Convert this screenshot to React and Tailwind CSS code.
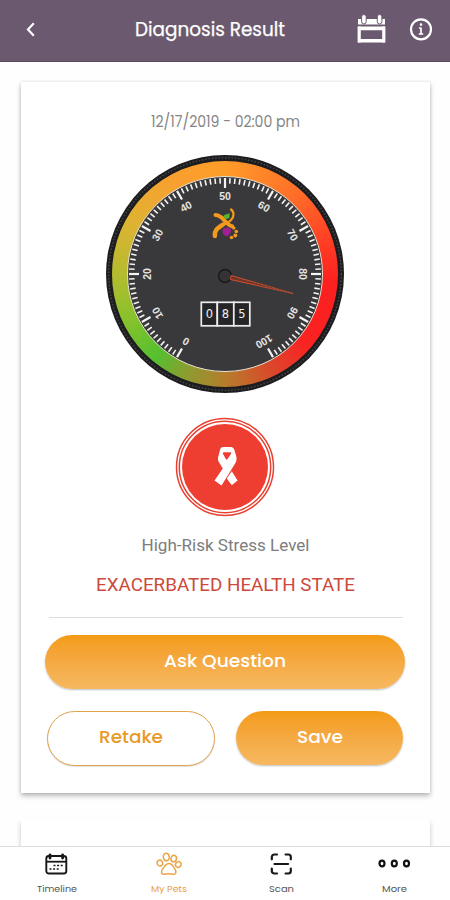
import React from "react";

const FONT = "font-['Poppins',Inter,'Liberation_Sans',sans-serif]";

// Point on the dial; 0 degrees is straight up, clockwise positive
const polar = (deg, r) => {
  const a = (deg * Math.PI) / 180;
  return [119 + r * Math.sin(a), 119 - r * Math.cos(a)];
};

function Label({ children, width, className }) {
  return (
    <svg width={width} height="28" className={`block overflow-visible ${FONT} ${className}`}>
      <text x="0" y="20" textLength={width} lengthAdjust="spacingAndGlyphs" fill="currentColor">
        {children}
      </text>
    </svg>
  );
}

function Gauge() {
  const ticks = Array.from({ length: 101 }, (_, i) => i);
  const labels = [0, 10, 20, 30, 40, 50, 60, 70, 80, 90, 100];
  return (
    <div className="relative size-[238px] rounded-full bg-[#1d1d20] p-[6px]">
      <div className="size-full rounded-full bg-[conic-gradient(#ff9c28_0deg,#ff7029_40deg,#ff3a24_75deg,#fc2020_95deg,#fb2222_130deg,#e0402a_150deg,#b57d2c_180deg,#8a9e30_202deg,#55c02f_220deg,#84c22c_243deg,#b5bc2f_270deg,#e0b232_300deg,#f8a030_330deg,#ff9c28_360deg)] p-[15px]">
        <div className="size-full rounded-full border border-[#e8e0d0] bg-[#39393b]" />
      </div>
      <svg viewBox="0 0 238 238" className="absolute inset-0 size-full">
        <circle cx="119" cy="119" r="116.3" fill="none" stroke="#48484d" strokeWidth="1.4" strokeDasharray="1.5 1.8" />
        {ticks.map((t) => {
          const deg = -150 + t * 3;
          const major = t % 10 === 0;
          const [x1, y1] = polar(deg, 96);
          const [x2, y2] = polar(deg, major ? 86 : 90.5);
          return <line key={t} x1={x1} y1={y1} x2={x2} y2={y2} stroke="#f4f4f4" strokeWidth={major ? 2.2 : 1.6} />;
        })}
        {labels.map((l) => {
          const deg = -150 + l * 3;
          return (
            <text
              key={l}
              transform={`rotate(${deg} 119 119)`}
              x="119"
              y="44.700"
              textAnchor="middle"
              fontSize="10.5"
              fontWeight="700"
              fill="#e4e4e4"
              fontFamily="'Liberation Sans', sans-serif"
            >
              {l}
            </text>
          );
        })}
        {/* ribbon-figure logo */}
        <g fill="none" stroke="#f39a1e" strokeLinecap="round">
          <path d="M109.500 60c4 .3 6 2 8.500 5s5 5.500 8 6.200" strokeWidth="4" />
          <path d="M108.800 81c-.3-6.500 3.200-8 8.200-11.500" strokeWidth="4.500" />
          <path d="M117 70c6-2.500 10.500-5.500 10.500-10.500 0-2.500-1-4-2.500-5" strokeWidth="2.200" />
        </g>
        <path d="M117.300 61.200c1-2 4.200-2 6.200-3v4.300c-2 2-4.200 2-6.200-1.300z" fill="#55b82b" />
        <path d="M117 74c2-2 6-2 7.500 0s-.5 6-4 7.500c-3-1-5-4.500-3.500-7.500z" fill="#a0208f" />
        <g fill="#f39a1e">
          <circle cx="127.800" cy="73" r="1.700" />
          <circle cx="130.300" cy="76.500" r="1.800" />
          <circle cx="129.300" cy="80.500" r="1.900" />
          <circle cx="125.500" cy="82.500" r="1.800" />
        </g>
        <circle cx="119" cy="121" r="6.500" fill="#333335" stroke="#19191b" strokeWidth="1.400" />
        <path d="M125 120.500L187 138.500L124.500 124.500Z" fill="#7a3427" stroke="#cf4f2c" strokeWidth="1" />
        <path d="M126 122.500L185 138" stroke="#39393b" strokeWidth=".7" strokeDasharray="2 2" />
        <g stroke="#ededed" strokeWidth="1.700" fill="#262628">
          <rect x="95.300" y="147.300" width="16" height="23.500" />
          <rect x="111.300" y="147.300" width="16.500" height="23.500" />
          <rect x="127.800" y="147.300" width="16" height="23.500" />
        </g>
        <g fontSize="11.500" fill="#f1f1f1" textAnchor="middle" fontFamily="'DejaVu Sans', sans-serif">
          <text x="103.300" y="163">0</text>
          <text x="119.300" y="163">8</text>
          <text x="135.800" y="163">5</text>
        </g>
      </svg>
    </div>
  );
}

function Badge() {
  return (
    <svg width="100" height="100" viewBox="0 0 100 100">
      <g fill="none" stroke="#e8402f">
        <circle cx="50" cy="50" r="48.500" strokeWidth="1.500" />
        <circle cx="50" cy="50" r="45.700" strokeWidth="1.500" />
      </g>
      <circle cx="50" cy="50" r="43" fill="#ee3d31" />
      {/* loop and front strand with its opening, then the tail behind */}
      <path
        fillRule="evenodd"
        fill="#fff"
        d="M48 30h8c1.500 0 2.500 1 3.200 2.500l2 6.500c.8 3 .3 5.500-1.200 7.800L46.500 68.500 39.500 63.500 49 49.800l-1.200 1.700-4-6.500c-.9-1.500-1-3.200-.6-5l1.800-7c.5-1.800 1.500-3 3-3zM48.800 35.300h6.400c1 0 1.300.9.800 1.700L52.300 42.300c-.4.500-1 .5-1.300 0l-3-5.200c-.4-.8-.1-1.800.8-1.800z"
      />
      <path fill="#fff" d="M56.800 54.300L62.600 63.500 56.800 68.300 51.800 61.500z" />
    </svg>
  );
}

function HeaderCalendar() {
  return (
    <svg width="29" height="30" viewBox="0 0 29 30" className="block">
      <path d="M1 5h27v5.500H1z" fill="#fff" />
      <path d="M2 13.500h25v14H2z" fill="none" stroke="#fff" strokeWidth="2" />
      <path d="M3 14h23v2.300H3zM3 25h23v2.500H3z" fill="#fff" />
      <path d="M2.200 12.500v16M26.800 12.500v16" stroke="#fff" strokeWidth="3.200" />
      <g fill="#fff" stroke="#6b5a6f" strokeWidth="1">
        <rect x="4.600" y=".5" width="4.600" height="9.500" rx="2.300" />
        <rect x="20.300" y=".5" width="4.600" height="9.500" rx="2.300" />
      </g>
    </svg>
  );
}

function TimelineIcon() {
  return (
    <svg width="23" height="22" viewBox="0 0 23 22" fill="none" stroke="#17171a">
      <rect x="1.300" y="3" width="20" height="17.500" rx="2.500" strokeWidth="1.900" />
      <path d="M1.500 8.700h19.600" strokeWidth="1.800" />
      <path d="M5 2v3M17.600 2v3" strokeWidth="2.800" strokeLinecap="round" />
      <path d="M8.500 12.500h10M4.500 16h10" strokeWidth="1.600" strokeDasharray="2 1.600" />
    </svg>
  );
}

function PawIcon() {
  return (
    <svg width="26" height="24" viewBox="0 0 26 24" fill="none" stroke="#e9a545" strokeWidth="1.500">
      <ellipse cx="3.900" cy="11" rx="2.700" ry="3" transform="rotate(-20 3.900 11)" />
      <ellipse cx="10.300" cy="5" rx="3" ry="3.800" transform="rotate(-5 10.300 5)" />
      <ellipse cx="17.800" cy="6.600" rx="2.700" ry="3.300" transform="rotate(15 17.800 6.600)" />
      <ellipse cx="22.300" cy="12.500" rx="2.600" ry="3" transform="rotate(35 22.300 12.500)" />
      <path d="M6 21.700c-1.700-3 .3-5 2.300-7 1.500-1.800 2-3.200 4.500-3.200 3 0 4 2 5.200 4.200 1.500 2.200 3 4 1.300 6-1.500 1.300-3.500 0-6.700 0-3 0-5 1.300-6.600 0z" />
    </svg>
  );
}

function ScanIcon() {
  return (
    <svg width="23" height="22" viewBox="0 0 23 22" fill="none" stroke="#17171a" strokeWidth="2.200" strokeLinecap="round">
      <path d="M1.800 6.300V4a2.500 2.500 0 0 1 2.500-2.500h2.700M15.600 1.500h2.700A2.500 2.500 0 0 1 20.800 4v2.300M20.800 15.700V18a2.500 2.500 0 0 1-2.500 2.500h-2.700M7 20.500H4.300A2.500 2.500 0 0 1 1.800 18v-2.300M4.500 11h13.600" />
    </svg>
  );
}

function MoreIcon() {
  return (
    <svg width="34" height="22" viewBox="0 0 34 22" fill="none" stroke="#111" strokeWidth="2.200">
      <ellipse cx="5" cy="10.500" rx="2.500" ry="2.900" />
      <ellipse cx="17.300" cy="10.500" rx="2.500" ry="2.900" />
      <ellipse cx="29.500" cy="10.500" rx="2.500" ry="2.900" />
    </svg>
  );
}

function NavItem({ icon, label, width, color }) {
  return (
    <div className={`flex flex-1 flex-col items-center pl-px ${color}`}>
      <div className="flex h-[34px] items-center justify-center">{icon}</div>
      <div className="-mt-[7.5px]">
        <Label width={width} className="text-[9.5px]">{label}</Label>
      </div>
    </div>
  );
}

export default function App() {
  return (
    <div className={`flex h-[900px] w-[450px] flex-col overflow-hidden bg-[#fefefe] ${FONT}`}>
      <header className="flex h-[62px] shrink-0 items-start border-b border-[#5c4a60] bg-[#6b5a6f] text-white">
        <div className="w-[135px] pt-[22px] pl-[26px]">
          <svg width="10" height="15" viewBox="0 0 10 15" fill="none" stroke="#fff" strokeWidth="2.200" className="block">
            <path d="M7.800 1.200L2 7.500l5.800 6.300" />
          </svg>
        </div>
        <div className="pt-[16px]">
          <Label width={150} className="text-[19px] [stroke:white] [stroke-width:0.25px]">Diagnosis Result</Label>
        </div>
        <div className="ml-auto flex gap-[22px] pt-[14px] pr-[17px]">
          <HeaderCalendar />
          <svg width="25" height="30" viewBox="0 0 25 30" fill="none" stroke="#fff" className="block">
            <circle cx="13" cy="15.300" r="10" strokeWidth="2.200" />
            <path d="M13 13.500v6.500M11 14h2M10.800 20h4.400" strokeWidth="1.700" />
            <circle cx="13" cy="10.600" r="1.300" fill="#fff" stroke="none" />
          </svg>
        </div>
      </header>

      <main className="flex min-h-0 flex-1 flex-col overflow-hidden pt-5 pl-[21px]">
        <section className="flex h-[711px] w-[409px] shrink-0 flex-col items-center bg-white shadow-[0_3px_5px_rgba(0,0,0,0.26),0_0_3px_rgba(0,0,0,0.12)]">
          <div className="mt-[24.5px]">
            <Label width={149} className="text-[15.5px] text-[#858585]">12/17/2019 - 02:00 pm</Label>
          </div>
          <div className="mt-[20px] mr-px">
            <Gauge />
          </div>
          <div className="mt-[24px] mr-px h-[100px]">
            <Badge />
          </div>
          <svg width="172" height="24" className="mt-[16px] block shrink-0 font-[Roboto,sans-serif] text-[16.5px] text-[#7d7d7d]">
            <text x="1.5" y="18" textLength="168" lengthAdjust="spacingAndGlyphs" fill="currentColor">High-Risk Stress Level</text>
          </svg>
          <svg width="267" height="32" className="mt-[12px] block shrink-0 overflow-visible font-[Roboto,sans-serif] text-[19px] text-[#cb4a3c]">
            <text x="4" y="22" textLength="259" lengthAdjust="spacingAndGlyphs" fill="currentColor">EXACERBATED HEALTH STATE</text>
          </svg>
          <div className="mt-[16.5px] h-px w-[354px] shrink-0 bg-[#dedede]" />
          <button className="mt-[17px] mr-px flex h-[54px] w-[360px] shrink-0 items-start justify-center rounded-full bg-linear-to-b from-[#f49b12] to-[#f6b860] pt-[12px] text-white shadow-[0_1px_2px_rgba(0,0,0,0.26)]">
            <Label width={122} className="text-[18.5px] font-medium">Ask Question</Label>
          </button>
          <div className="mt-[22px] mr-px flex w-[356px] justify-between">
            <button className="flex h-[55px] w-[168px] items-start justify-center rounded-full border border-[#e2a14c] bg-white pt-[11px] text-[#e99a26] shadow-[0_1px_1px_rgba(0,0,0,0.12)]">
              <Label width={64} className="text-[18.5px] font-medium">Retake</Label>
            </button>
            <button className="flex h-[54px] w-[167px] items-start justify-center rounded-full bg-linear-to-b from-[#f49b12] to-[#f6b860] pt-[12px] text-white shadow-[0_1px_2px_rgba(0,0,0,0.26)]">
              <Label width={46} className="text-[18.5px] font-medium">Save</Label>
            </button>
          </div>
        </section>
        <section className="mt-[26px] h-[100px] w-[409px] shrink-0 bg-white shadow-[0_4px_5px_rgba(0,0,0,0.22)]" />
      </main>

      <nav className="flex h-[54px] shrink-0 border-t border-[#dedede] bg-white pt-[2px]">
        <NavItem icon={<TimelineIcon />} label="Timeline" width={40} color="text-[#555]" />
        <NavItem icon={<PawIcon />} label="My Pets" width={36} color="text-[#e9a13d]" />
        <NavItem icon={<ScanIcon />} label="Scan" width={25} color="text-[#555]" />
        <NavItem icon={<MoreIcon />} label="More" width={25} color="text-[#555]" />
      </nav>
    </div>
  );
}
